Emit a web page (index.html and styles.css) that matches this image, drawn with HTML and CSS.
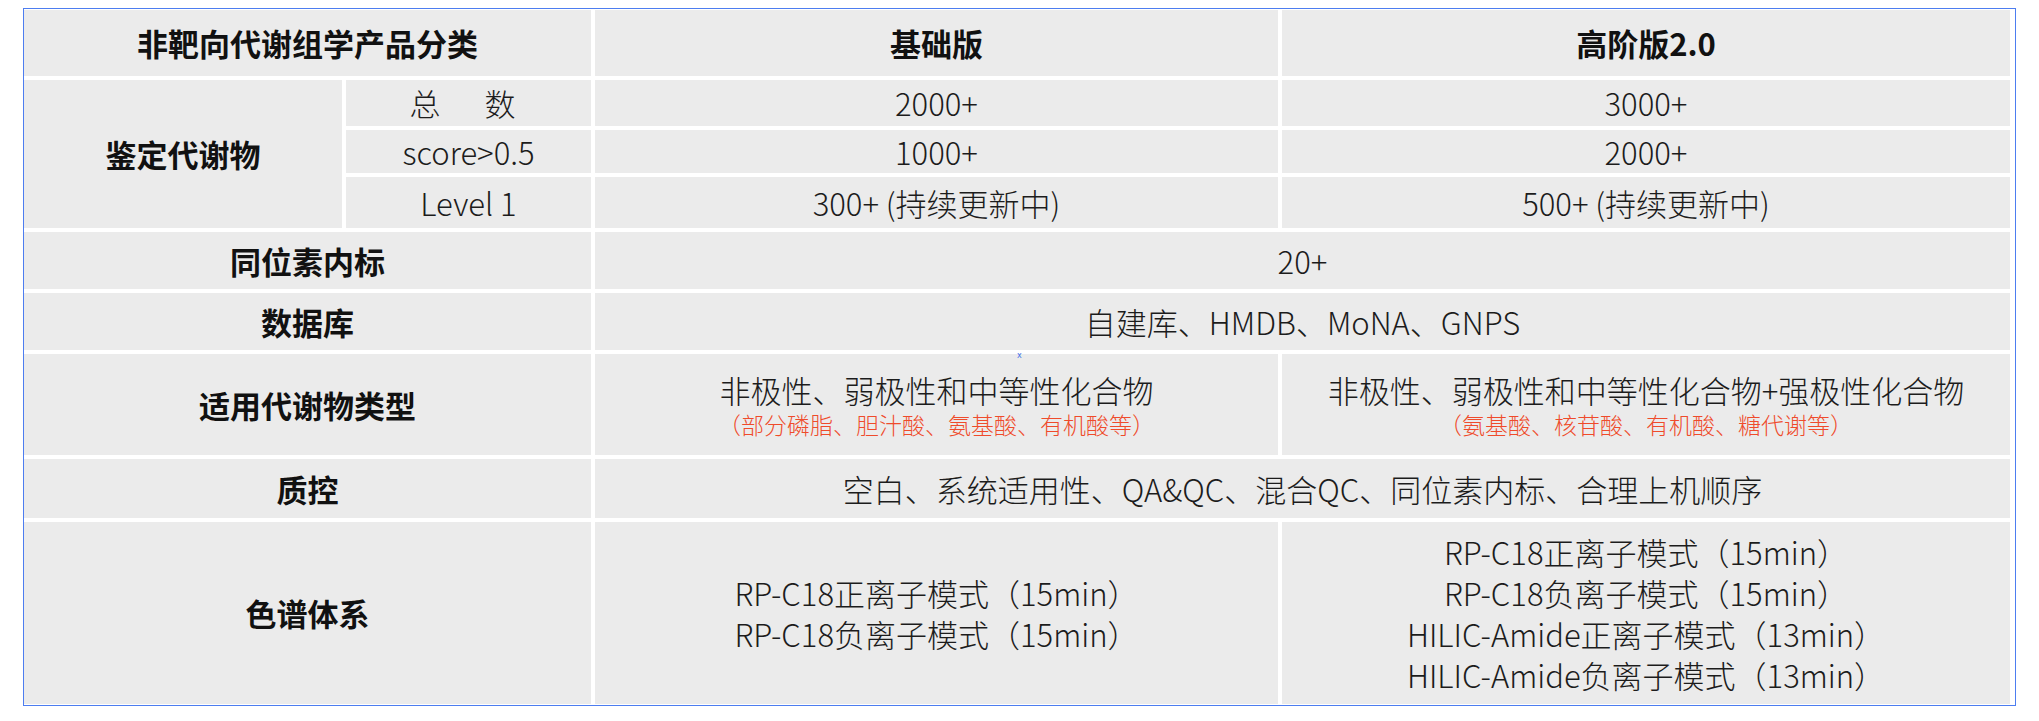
FILE: index.html
```html
<!DOCTYPE html>
<html lang="zh-CN">
<head>
<meta charset="utf-8">
<title>非靶向代谢组学产品分类</title>
<link rel="stylesheet" href="styles.css">
</head>
<body>
<div class="sheet">
  <div class="grid">
    <div class="cell bold span-ab">非靶向代谢组学产品分类</div>
    <div class="cell bold">基础版</div>
    <div class="cell bold">高阶版2.0</div>

    <div class="cell bold rows-3">鉴定代谢物</div>
    <div class="cell shift-left">总<span class="wide-gap"></span>数</div>
    <div class="cell">2000+</div>
    <div class="cell">3000+</div>

    <div class="cell">score&gt;0.5</div>
    <div class="cell">1000+</div>
    <div class="cell">2000+</div>

    <div class="cell">Level 1</div>
    <div class="cell">300+ (持续更新中)</div>
    <div class="cell">500+ (持续更新中)</div>

    <div class="cell bold span-ab">同位素内标</div>
    <div class="cell span-cd">20+</div>

    <div class="cell bold span-ab">数据库</div>
    <div class="cell span-cd">自建库、HMDB、MoNA、GNPS</div>

    <div class="cell bold span-ab">适用代谢物类型</div>
    <div class="cell stack">
      <div class="main-line">非极性、弱极性和中等性化合物</div>
      <div class="note">（部分磷脂、胆汁酸、氨基酸、有机酸等）</div>
    </div>
    <div class="cell stack">
      <div class="main-line">非极性、弱极性和中等性化合物+强极性化合物</div>
      <div class="note">（氨基酸、核苷酸、有机酸、糖代谢等）</div>
    </div>

    <div class="cell bold span-ab">质控</div>
    <div class="cell span-cd">空白、系统适用性、QA&amp;QC、混合QC、同位素内标、合理上机顺序</div>

    <div class="cell bold span-ab">色谱体系</div>
    <div class="cell stack lines">
      <div>RP-C18正离子模式（15min）</div>
      <div>RP-C18负离子模式（15min）</div>
    </div>
    <div class="cell stack lines">
      <div>RP-C18正离子模式（15min）</div>
      <div>RP-C18负离子模式（15min）</div>
      <div>HILIC-Amide正离子模式（13min）</div>
      <div>HILIC-Amide负离子模式（13min）</div>
    </div>
  </div>
  <span class="mark">x</span>
</div>
</body>
</html>
```

FILE: styles.css
```css
* {
  box-sizing: border-box;
}

html, body {
  margin: 0;
  padding: 0;
  background: #ffffff;
}

body {
  font-family: "Noto Sans CJK SC", "Noto Sans", sans-serif;
  color: #1c1c1c;
}

.sheet {
  position: relative;
  width: 1993px;
  height: 698px;
  margin: 8px 0 0 23px;
  border: 1px solid #4d7df0;
  padding: 1px 5px 0 0;
  background: #ffffff;
}

.grid {
  display: grid;
  grid-template-columns: 318px 245px 683px 728px;
  grid-template-rows: 66px 46px 43px 51px 57px 57px 101px 59px 182px;
  gap: 4px;
  background: #ffffff;
}

.cell {
  background: #ebebeb;
  display: flex;
  align-items: center;
  justify-content: center;
  text-align: center;
  font-size: 31px;
  font-weight: 300;
  line-height: 1.2;
  white-space: nowrap;
}

.bold {
  font-weight: 700;
  color: #111111;
}

.span-ab {
  grid-column: 1 / 3;
}

.span-cd {
  grid-column: 3 / 5;
}

.rows-3 {
  grid-row: span 3;
}

.shift-left {
  padding-right: 12px;
}

.wide-gap {
  display: inline-block;
  width: 44px;
}

.stack {
  flex-direction: column;
}

.main-line {
  line-height: 38px;
}

.note {
  font-size: 23px;
  line-height: 30px;
  color: #ef4b2b;
}

.lines > div {
  line-height: 41px;
}

.mark {
  position: absolute;
  left: 993px;
  top: 343px;
  font-family: "DejaVu Sans", sans-serif;
  font-size: 8px;
  line-height: 8px;
  color: #3d6fe6;
}
```
